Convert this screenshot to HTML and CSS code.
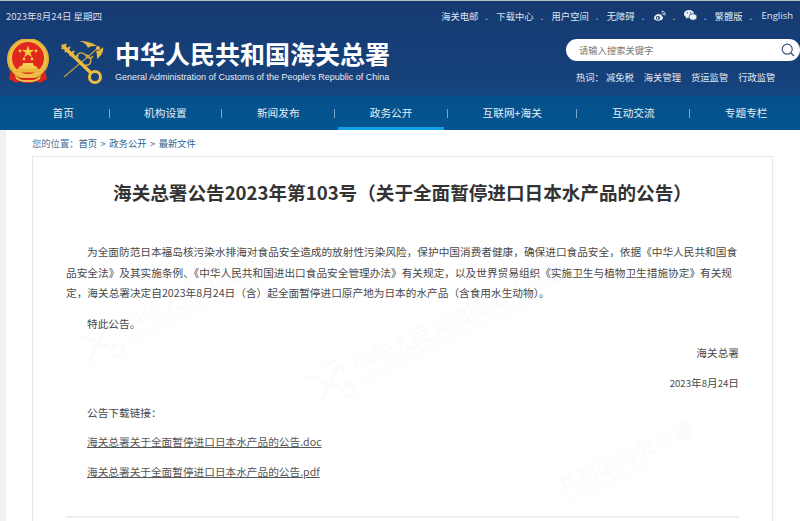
FILE: index.html
```html
<!DOCTYPE html>
<html lang="zh-CN">
<head>
  <meta charset="UTF-8">
  <title>海关总署公告2023年第103号</title>
  <link rel="stylesheet" href="styles.css">
</head>

<body>
  <svg width="0" height="0" class="defs">
    <symbol id="wm-key" viewBox="0 0 44 44">
      <path d="M3 6 29 31M4 37 38 8" stroke="currentColor" stroke-width="3" fill="none"/>
      <circle cx="35" cy="37" r="6" fill="none" stroke="currentColor" stroke-width="3"/>
      <path d="M19 1c8 0 14 2 18 5-4 0-7 0-9 2-1-3-4-6-9-7zM43 7c1 5-2 9-6 12 0-3 0-6-1-8 3 0 5-2 7-4z" fill="currentColor"/>
    </symbol>
  </svg>

  <header class="header">
    <div class="topbar">
      <span class="today">2023年8月24日 星期四</span>
      <div class="toplinks">
        <a>海关电邮</a><i>.</i>
        <a>下载中心</a><i>.</i>
        <a>用户空间</a><i>.</i>
        <a>无障碍</a><i>.</i>
        <svg class="social" width="13" height="12" viewBox="0 0 14 12">
          <path d="M5.600 3.600C3.400 4.400 1 6.300 1 8.200 1 10 3 11.200 5.600 11.200c2.800 0 5.200-1.500 5.200-3.300 0-1.100-1-1.600-1.700-1.800.4-1 .2-1.900-1-2-.7 0-1.500.3-2 .6.200-.8 0-1.400-.5-1.100z" fill="#eef2f7"/>
          <ellipse cx="5.300" cy="8" rx="2.400" ry="2" fill="#163c74"/>
          <circle cx="5" cy="8.200" r="1" fill="#eef2f7"/>
          <path d="M9.300 2.800c1.300-.3 2.300.8 1.900 2.200M9.300.9c2.700-.4 4.400 2 3.500 4.500" fill="none" stroke="#eef2f7" stroke-width="1"/>
        </svg><i>.</i>
        <svg class="social" width="13" height="11" viewBox="0 0 13 11">
          <ellipse cx="5" cy="4" rx="5" ry="4" fill="#eef2f7"/>
          <path d="M2.500 6.500 2 8.700 4.500 7.500z" fill="#eef2f7"/>
          <ellipse cx="9" cy="7" rx="4" ry="3.300" fill="#eef2f7" stroke="#163c74" stroke-width=".7"/>
          <circle cx="3.400" cy="2.900" r=".6" fill="#163c74"/>
          <circle cx="6.400" cy="2.900" r=".6" fill="#163c74"/>
        </svg><i>.</i>
        <a>繁體版</a><i>.</i>
        <a class="en">English</a>
      </div>
    </div>

    <div class="masthead">
      <div class="brand">
        <svg class="emblem" width="44" height="46" viewBox="0 0 44 46">
          <circle cx="22" cy="20" r="20" fill="#efbe45" stroke="#e6b03a" stroke-width="2"/>
          <circle cx="22" cy="19" r="16" fill="#e0281f"/>
          <path d="M22 6.500l1.500 4.500h4.700l-3.800 2.800 1.500 4.500-3.900-2.800-3.900 2.800 1.500-4.500-3.800-2.800h4.700z" fill="#f7cb3f"/>
          <circle cx="14" cy="12" r="1.400" fill="#f7cb3f"/>
          <circle cx="30" cy="12" r="1.400" fill="#f7cb3f"/>
          <circle cx="18" cy="20" r="1.400" fill="#f7cb3f"/>
          <circle cx="26" cy="20" r="1.400" fill="#f7cb3f"/>
          <path d="M17 24h10l1 3H16z" fill="#f7d05a"/>
          <path d="M14 27h16l2 3H12z" fill="#f3c64a"/>
          <rect x="10" y="30" width="24" height="3.500" fill="#e9b63c"/>
          <path d="M5 31c3 5 6 7 10 8h14c4-1 7-3 10-8l2 9-7 4-4-2-4 2h-8l-4-2-4 2-7-4z" fill="#d6261e"/>
          <path d="M9 36c3 3 6 5 9 5h8c3 0 6-2 9-5l-1 4c-3 2-6 3-8 3h-8c-2 0-5-1-8-3z" fill="#f0bf45"/>
        </svg>
        <svg class="keys" width="44" height="44" viewBox="0 0 44 44">
          <path d="M4 37 38 8" stroke="#b99a4e" stroke-width="1.300"/>
          <path d="M21 22c-4-2-5-5-3-8 3-2 7-1 8 2 2 3 6 3 7 0" fill="none" stroke="#dcae3c" stroke-width="1.300"/>
          <path d="M25 25c3 1 6-1 6-5 0-3-3-5-5-5" fill="none" stroke="#dcae3c" stroke-width="1.300"/>
          <path d="M3 6 30 32" stroke="#edbd42" stroke-width="3.400" stroke-linecap="round"/>
          <path d="M6 4 2 9M10 7l-5 5M14 11l-4 5M18 15l-3 4" stroke="#e6b43a" stroke-width="2.200"/>
          <circle cx="35" cy="37" r="5.500" fill="none" stroke="#edbd42" stroke-width="3"/>
          <path d="M19 1c8 0 14 2 18 5-4 0-7 0-9 2-1-3-4-6-9-7z" fill="#e7b93f"/>
          <path d="M43 7c1 5-2 9-6 12 0-3 0-6-1-8 3 0 5-2 7-4z" fill="#e7b93f"/>
          <circle cx="38" cy="8" r="2" fill="#edbd42"/>
        </svg>
        <div class="brand-text">
          <div class="cn-name">中华人民共和国海关总署</div>
          <div class="en-name">General Administration of Customs of the People's Republic of China</div>
        </div>
      </div>
      <div class="search-box">
        <div class="search">
          <span>请输入搜索关键字</span>
          <svg width="14" height="14" viewBox="0 0 14 14">
            <circle cx="6.200" cy="6.200" r="5" fill="none" stroke="#3c5a7c" stroke-width="1.200"/>
            <path d="M10 10l3 3" stroke="#3c5a7c" stroke-width="1.400"/>
          </svg>
        </div>
        <div class="hotwords">
          <span>热词：</span><a>减免税</a><a>海关管理</a><a>货运监管</a><a>行政监管</a>
        </div>
      </div>
    </div>

    <nav class="nav">
      <a>首页</a><i></i>
      <a>机构设置</a><i></i>
      <a>新闻发布</a><i></i>
      <a class="active">政务公开</a><i></i>
      <a>互联网+海关</a><i></i>
      <a>互动交流</a><i></i>
      <a>专题专栏</a>
    </nav>
  </header>

  <main class="page">
    <div class="crumb">您的位置：<a>首页</a><b>&gt;</b><a>政务公开</a><b>&gt;</b><a>最新文件</a></div>

    <article class="card">
      <div class="mark mark-a" aria-hidden="true">
        <svg width="44" height="44"><use href="#wm-key"/></svg>
        <div><span>中华人民共和国海关</span><small>GENERAL ADMINISTRATION OF CUSTOMS</small></div>
      </div>
      <div class="mark mark-b" aria-hidden="true">
        <svg width="44" height="44"><use href="#wm-key"/></svg>
        <div><span>中华人民共和国海关总署</span><small>GENERAL ADMINISTRATION OF CUSTOMS P.R.CHINA</small></div>
      </div>
      <div class="mark mark-c" aria-hidden="true">
        <div><span>共和国海关总署</span><small>OF CUSTOMS P.R.CHINA</small></div>
      </div>

      <h1>海关总署公告2023年第103号（关于全面暂停进口日本水产品的公告）</h1>
      <div class="content">
        <p class="lead">为全面防范日本福岛核污染水排海对食品安全造成的放射性污染风险，保护中国消费者健康，确保进口食品安全，依据《中华人民共和国食品安全法》及其实施条例、《中华人民共和国进出口食品安全管理办法》有关规定，以及世界贸易组织《实施卫生与植物卫生措施协定》有关规定，海关总署决定自2023年8月24日（含）起全面暂停进口原产地为日本的水产品（含食用水生动物）。</p>
        <p class="line indent first">特此公告。</p>
        <p class="line right">海关总署</p>
        <p class="line right"><span class="num">2023</span>年<span class="num">8</span>月<span class="num">24</span>日</p>
        <p class="line indent">公告下载链接：</p>
        <p class="line indent"><a>海关总署关于全面暂停进口日本水产品的公告.doc</a></p>
        <p class="line indent"><a>海关总署关于全面暂停进口日本水产品的公告.pdf</a></p>
        <div class="rule"></div>
      </div>
    </article>
  </main>
</body>
</html>
```

FILE: styles.css
```css
html, body {
  margin: 0;
  height: 521px;
  overflow: hidden;
}

body {
  background: #fff;
  color: #444;
  font-family: "Noto Sans CJK SC", "Liberation Sans", sans-serif;
  font-size: 10.67px;
}

.defs {
  position: absolute;
}

.header {
  border-top: 1px solid #b9bdc4;
  background: linear-gradient(#163a72, #16417a 60%, #135193);
  color: #dfe6ef;
}

.topbar {
  height: 29px;
  display: flex;
  justify-content: space-between;
  align-items: center;
  padding: 0 7px 0 6px;
}

.today {
  font-size: 9.5px;
  color: #d5deea;
}

.toplinks {
  display: flex;
  align-items: center;
  gap: 7px;
  font-size: 9.3px;
}

.toplinks i {
  font-style: normal;
  width: 4px;
}

.toplinks .en {
  font-family: "Open Sans", "Liberation Sans", sans-serif;
  font-size: 9.5px;
  margin-left: 1px;
}

.masthead {
  height: 66px;
  display: flex;
  justify-content: space-between;
}

.brand {
  display: flex;
  align-items: flex-start;
  padding-left: 6px;
  padding-top: 9px;
}

.emblem {
  flex: none;
}

.keys {
  flex: none;
  margin-left: 10px;
  margin-top: 1px;
}

.brand-text {
  margin-left: 11px;
}

.cn-name {
  color: #fff;
  font-size: 25px;
  line-height: 29px;
  font-weight: 700;
  white-space: nowrap;
}

.en-name {
  color: #e6ecf4;
  font-size: 9px;
  font-family: "Liberation Sans", sans-serif;
  line-height: 12px;
  white-space: nowrap;
  margin-top: 3px;
}

.search-box {
  width: 234px;
  padding-top: 9px;
}

.search {
  height: 22px;
  background: #fff;
  border-radius: 11px;
  display: flex;
  align-items: center;
  justify-content: space-between;
  padding: 0 5px 0 13px;
  color: #777;
  font-size: 9.3px;
}

.hotwords {
  display: flex;
  gap: 10px;
  margin-top: 9px;
  padding-left: 10px;
  font-size: 9.3px;
  color: #e3e9f1;
}

.hotwords span {
  margin-right: -8px;
}

.nav {
  height: 34px;
  display: flex;
  align-items: stretch;
  padding-left: 18px;
  background: linear-gradient(#05508c, #04558f);
  color: #e6eef6;
  font-size: 10.67px;
}

.nav a {
  padding: 0 34.6px;
  line-height: 34px;
  white-space: nowrap;
}

.nav i {
  width: 1px;
  height: 9px;
  margin: 13px 0 0;
  background: #7fa5c8;
  flex: none;
}

.nav a.active {
  box-shadow: inset 0 -3px 0 #10a0ec;
  margin: 0 3px;
  padding: 0 31.6px;
}

.page {
  border-left: 6px solid #f1f1f1;
  padding-left: 26px;
}

.crumb {
  height: 26px;
  line-height: 27px;
  font-size: 9.3px;
  color: #4f7396;
}

.crumb a {
  color: #2f668f;
}

.crumb b {
  font-weight: 400;
  margin: 0 3.5px;
}

.card {
  position: relative;
  overflow: hidden;
  box-sizing: border-box;
  width: 741px;
  height: 365px;
  border: 1px solid #e8e8e8;
  border-bottom: none;
  background: #fff;
}

/* faint watermark stamped over the card */
.mark {
  position: absolute;
  display: flex;
  align-items: center;
  gap: 6px;
  color: #fbfbfc;
  transform: rotate(-25deg);
  transform-origin: left bottom;
  white-space: nowrap;
}

.mark span {
  display: block;
  font-size: 21px;
  line-height: 26px;
  font-family: "Noto Sans CJK SC", serif;
}

.mark small {
  display: block;
  font-size: 8px;
  line-height: 10px;
  font-family: "Liberation Serif", serif;
}

.mark-a { left: 56px; top: 170px; }
.mark-b { left: 287px; top: 210px; }
.mark-c { left: 535px; top: 315px; }

.card h1 {
  position: relative;
  margin: 22px 0 0;
  text-align: center;
  font-size: 18.6px;
  line-height: 26px;
  color: #333;
  font-weight: 700;
}

.content {
  position: relative;
  padding: 0 33px;
  margin-top: 37px;
  color: #484848;
}

.content p {
  margin: 0;
}

.lead {
  text-indent: 21px;
  line-height: 20.5px;
}

.content .line {
  line-height: 16px;
  margin-top: 13.7px;
}

.content .first {
  margin-top: 12px;
}

.content .indent {
  padding-left: 21px;
}

.right {
  text-align: right;
}

.num {
  font-size: 9.6px;
}

.content a {
  text-decoration: underline;
  color: #555;
}

.rule {
  height: 2px;
  margin-top: 36px;
  background: #eee;
}
```
